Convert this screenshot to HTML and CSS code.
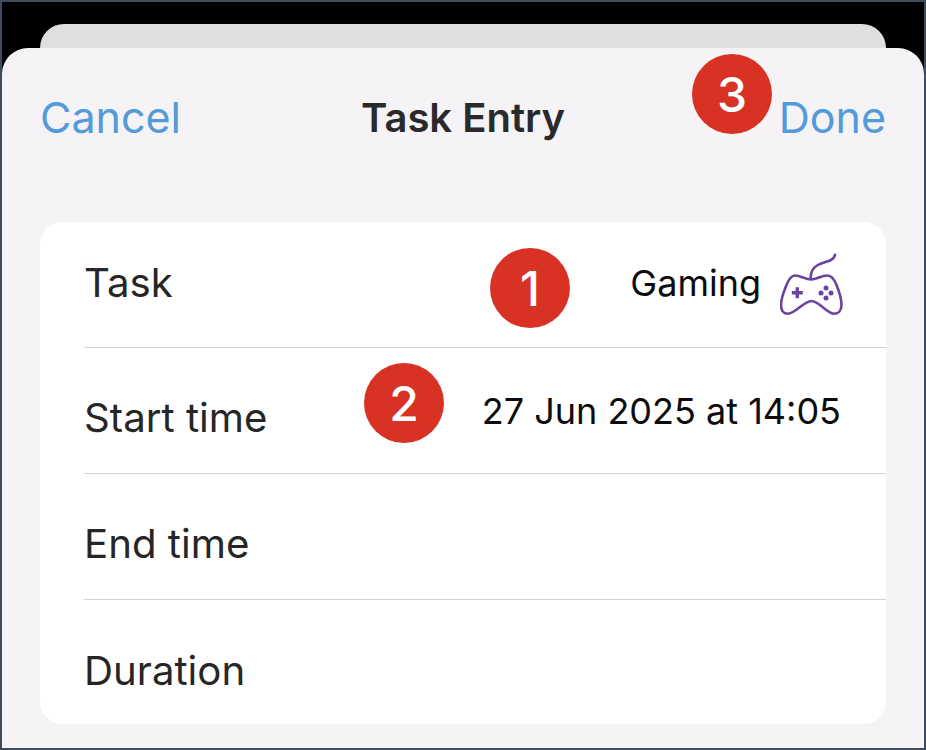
FILE: index.html
```html
<!DOCTYPE html>
<html lang="en">
<head>
    <meta charset="UTF-8">
    <title>Task Entry</title>
    <link rel="stylesheet" href="styles.css">
</head>
<body>
    <div class="frame">
        <div class="back-sheet"></div>
        <div class="sheet">
            <header class="nav">
                <span class="nav-btn">Cancel</span>
                <span class="nav-title">Task Entry</span>
                <span class="nav-btn nav-done">Done</span>
            </header>
            <div class="card">
                <div class="row">
                    <span class="label">Task</span>
                    <span class="value value-task">
                        Gaming
                        <svg class="pad-icon" width="64" height="64" viewBox="0 0 64 64" fill="none">
                            <path d="M30.700 25.700C30.500 20 32 15.500 37 12.500C42 9.500 47 9 51 7C53.500 5.700 54.500 4 55 1.700" stroke="#6b449f" stroke-width="2.600" stroke-linecap="round"/>
                            <path d="M15 22.500C21 22.500 25 26.500 31 26.500C37 26.500 41 22.500 47.500 22.500C52 22.500 54.500 27 56.500 32C59 38 61.500 46 61.500 52C61.500 58 58 60.800 54 60.800C47 60.800 39 48 31.500 48C24 48 15 60.800 8 60.800C4 60.800 1 58 1 52C1 46 4 38 6.500 32C8.500 27 11 22.500 15 22.500Z" stroke="#6b449f" stroke-width="2.600"/>
                            <path d="M17.300 34.300V45.300M11.800 39.800H22.800" stroke="#6b449f" stroke-width="3.400"/>
                            <circle cx="46" cy="35" r="2.500" fill="#6b449f"/>
                            <circle cx="46" cy="45" r="2.500" fill="#6b449f"/>
                            <circle cx="41" cy="40" r="2.500" fill="#6b449f"/>
                            <circle cx="51" cy="40" r="2.500" fill="#6b449f"/>
                        </svg>
                    </span>
                </div>
                <div class="row">
                    <span class="label">Start time</span>
                    <span class="value">27 Jun 2025 at 14:05</span>
                </div>
                <div class="row">
                    <span class="label">End time</span>
                </div>
                <div class="row">
                    <span class="label">Duration</span>
                </div>
            </div>
        </div>
        <span class="badge badge-1">1</span>
        <span class="badge badge-2">2</span>
        <span class="badge badge-3">3</span>
    </div>
</body>
</html>
```

FILE: styles.css
```css
html, body {
    margin: 0;
    padding: 0;
}

body {
    width: 926px;
    height: 750px;
    overflow: hidden;
    font-family: Inter, "Liberation Sans", sans-serif;
}

.frame {
    position: relative;
    box-sizing: border-box;
    width: 926px;
    height: 750px;
    border: 2px solid #3e4c5c;
    background: #000;
    display: flex;
    flex-direction: column;
}

.back-sheet {
    height: 24px;
    margin: 22px 38px 0;
    background: #dfdfdf;
    border-radius: 24px 24px 0 0;
}

.sheet {
    flex: 1;
    background: #f5f3f5;
    border-radius: 26px 26px 0 0;
    padding: 0 38px;
}

.nav {
    display: grid;
    grid-template-columns: 1fr auto 1fr;
    align-items: center;
    height: 138px;
}

.nav-btn {
    font-size: 43px;
    color: #539bdb;
}

.nav-done {
    text-align: right;
}

.nav-title {
    font-size: 40px;
    font-weight: 600;
    color: #2a2a2a;
}

.card {
    background: #fff;
    border-radius: 22px;
    padding-left: 44px;
    margin-top: 36px;
    height: 502px;
}

.row {
    display: flex;
    align-items: center;
    justify-content: space-between;
    box-sizing: border-box;
    height: 126px;
    padding-right: 45px;
    border-bottom: 1px solid #d2d2d4;
}

.row:last-child {
    border-bottom: none;
}

.label {
    font-size: 40.200px;
    color: #262626;
    padding-bottom: 4px;
}

.row + .row .label {
    padding-top: 14px;
    padding-bottom: 0;
}

.value {
    font-size: 36px;
    color: #0c0c0c;
}

.value-task {
    display: flex;
    align-items: center;
    gap: 19px;
    margin-right: -3px;
    padding-bottom: 4px;
}

.pad-icon {
    display: block;
    margin-top: 4px;
}

.badge {
    position: absolute;
    width: 80px;
    height: 80px;
    border-radius: 50%;
    background: #d83224;
    color: #fff;
    font-size: 48px;
    font-weight: 500;
    display: flex;
    align-items: center;
    justify-content: center;
}

.badge-1 { left: 488px; top: 246px; }
.badge-2 { left: 362px; top: 361px; }
.badge-3 { left: 690px; top: 52px; }
```
